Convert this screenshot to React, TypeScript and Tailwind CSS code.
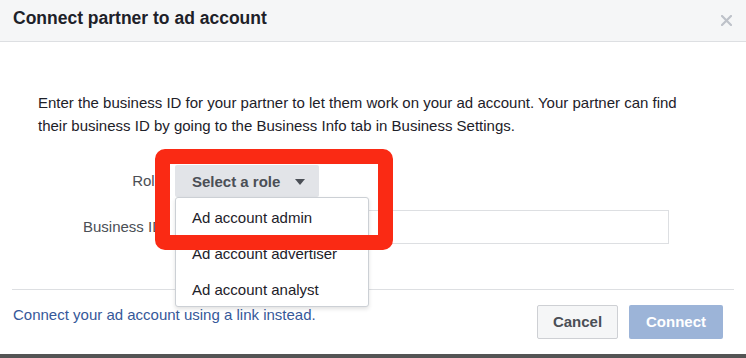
import React from "react";

export default function App() {
  return (
    <div
      className="relative w-[746px] h-[358px] overflow-hidden bg-white flex flex-col"
      style={{ fontFamily: '"Liberation Sans", Arial, Helvetica, sans-serif' }}
    >
      {/* Header */}
      <div className="h-[42px] shrink-0 bg-[#f5f6f7] border-b border-[#dddfe2] flex items-center justify-between pl-[13px] pr-[13px] pb-[3px]">
        <div className="text-[17.5px] font-bold text-[#1d2129] leading-none">
          Connect partner to ad account
        </div>
        <svg width="11" height="11" viewBox="0 0 11 11" className="mt-[3px] mr-[1px]">
          <path d="M1 1 L10 10 M10 1 L1 10" stroke="#bec2c9" strokeWidth="2.2" strokeLinecap="round" />
        </svg>
      </div>

      {/* Body text */}
      <p className="mt-[49px] pl-[38px] text-[15px] leading-[23px] text-[#1d2129]">
        Enter the business ID for your partner to let them work on your ad account. Your partner can find
        <br />
        their business ID by going to the Business Info tab in Business Settings.
      </p>

      {/* Form */}
      <div className="mt-[28px] pl-[38px] flex flex-col gap-[13px]">
        <div className="flex items-center h-[32px]">
          <div className="w-[125px] text-right text-[15px] text-[#4b4f56]">Role</div>
          <div className="relative ml-[12px] z-20">
            <div className="h-[32px] w-[144px] bg-[#e2e4e8] rounded-[2px] flex items-center pl-[17px] gap-[15px]">
              <span className="text-[15px] font-bold text-[#4b4f56] leading-none">Select a role</span>
              <svg width="10" height="6" viewBox="0 0 10 6" className="mt-[1px]">
                <path d="M0 0 L10 0 L5 6 Z" fill="#4b4f56" />
              </svg>
            </div>
            <div className="absolute left-0 top-[32px] w-[194px] bg-white border border-[#ccd0d5] rounded-[3px] shadow-[0_2px_4px_rgba(0,0,0,0.12)] flex flex-col">
              <div className="h-[36px] flex items-center pl-[16px] pt-[4px] text-[15px] text-[#1d2129]">Ad account admin</div>
              <div className="h-[36px] flex items-center pl-[16px] pt-[4px] text-[15px] text-[#1d2129]">Ad account advertiser</div>
              <div className="h-[36px] flex items-center pl-[16px] pt-[4px] text-[15px] text-[#1d2129]">Ad account analyst</div>
            </div>
          </div>
        </div>
        <div className="flex items-center h-[34px]">
          <div className="w-[125px] text-right text-[15px] text-[#4b4f56]">Business ID</div>
          <div className="ml-[12px] w-[494px] h-[34px] border border-[#dddfe2] bg-white" />
        </div>
      </div>

      {/* Footer */}
      <div className="mt-[45px] mx-[12px] border-t border-[#dddfe2]" />
      <div className="pt-[15px] pl-[13px] pr-[23px] flex items-start justify-between">
        <a className="text-[15px] leading-[20px] text-[#365899]">Connect your ad account using a link instead.</a>
        <div className="flex gap-[11px]">
          <button className="h-[34px] w-[81px] bg-[#f5f6f7] border border-[#ced0d4] rounded-[2px] text-[15px] font-bold text-[#4b4f56]">
            Cancel
          </button>
          <button className="h-[34px] w-[94px] bg-[#9cb4d8] rounded-[2px] text-[15px] font-bold text-white">
            Connect
          </button>
        </div>
      </div>
      <div className="mt-auto h-[4px] bg-[#545454] shrink-0" />

      {/* Red highlight annotation */}
      <div className="absolute left-[155px] top-[149px] w-[238px] h-[101px] border-[15px] border-[#fa2a14] rounded-[10px] z-30" />
    </div>
  );
}
